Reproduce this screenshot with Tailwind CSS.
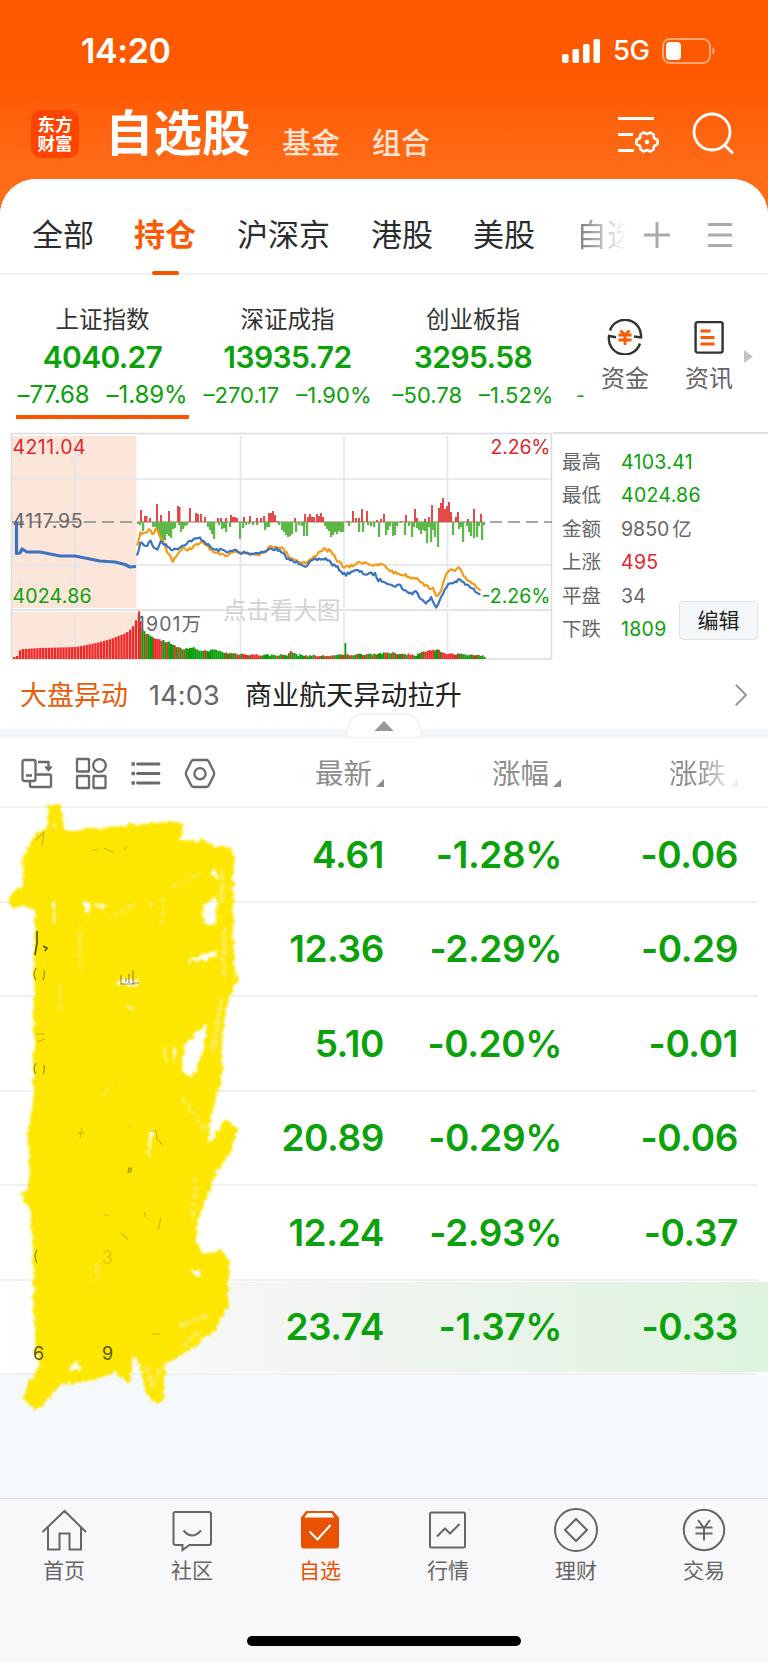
<!DOCTYPE html>
<html lang="zh-CN">

<head>
    <meta charset="UTF-8">
    <meta name="viewport" content="width=device-width, initial-scale=1.0">
    <title>自选股</title>
    <script src="https://cdn.jsdelivr.net/npm/@tailwindcss/browser@4"></script>
</head>

<body class="bg-[#f5f9fb] font-['Inter','Noto_Sans_CJK_SC',sans-serif] text-[#333]">
<div class="relative w-[768px] h-[1663px] overflow-hidden flex flex-col bg-linear-to-b from-[#ff5900] from-[80px] to-[#ff6d19] to-[180px]">

    <!-- Status bar -->
    <div class="h-[102px] shrink-0 flex items-center justify-between pl-[81px] pr-[52px] text-white">
        <span class="text-[34px] leading-none font-semibold tracking-[-0.4px]">14:20</span>
        <div class="flex items-center">
            <svg class="w-[38px] h-6" viewBox="0 0 38 24" fill="#fff">
                <rect x="0" y="15" width="6.5" height="9" rx="1.8"/>
                <rect x="10.5" y="10" width="6.5" height="14" rx="1.8"/>
                <rect x="21" y="5" width="6.5" height="19" rx="1.8"/>
                <rect x="31.5" y="0" width="6.5" height="24" rx="1.8"/>
            </svg>
            <span class="ml-[13px] w-[49px] text-[27.500px] leading-none font-medium tracking-[-0.5px]">5G</span>
            <svg class="w-[54px] h-[26px]" viewBox="0 0 54 26">
                <rect x="1" y="1" width="47" height="24" rx="7" fill="none" stroke="#fff" stroke-opacity=".45" stroke-width="2"/>
                <rect x="4" y="4" width="15" height="18" rx="4" fill="#fff"/>
                <path d="M50.5 9.500c3 1 3 6 0 7z" fill="#fff" fill-opacity=".5"/>
            </svg>
        </div>
    </div>

    <!-- Title bar -->
    <div class="h-[77px] shrink-0 flex pl-[31px] text-white">
        <div class="mt-[8px] w-12 h-12 rounded-[10px] bg-[#ff4400] flex flex-col items-center justify-center text-[17.500px] leading-[19px] font-bold">
            <span>东方</span><span>财富</span>
        </div>
        <h1 class="ml-[26px] w-[177px] mt-[7px] text-[48.500px] leading-[50px] font-bold">自选股</h1>
        <span class="w-[90px] mt-[24px] text-[29px] leading-[36px] font-medium text-[#ffe3d3]">基金</span>
        <span class="w-[157px] mt-[24px] text-[29px] leading-[36px] font-medium text-[#ffe3d3]">组合</span>
        <svg class="ml-[88px] mt-[12px] w-[44px] h-[42px]" viewBox="0 0 44 42" fill="none" stroke="#fff" stroke-width="2.800">
            <path d="M1 4.500h36M1 20.500h15M1 36.500h16"/>
            <path d="M26.500 18.500l3.500 1.500 3.500-1.500 3 2 .5 3.500 3.500 2v4l-3.500 2-.5 3.500-3 2-3.500-1.500-3.500 1.500-3-2-.5-3.500-3.500-2v-4l3.500-2 .5-3.500z" stroke-linejoin="round" stroke-width="2.600"/>
            <circle cx="30" cy="28" r="2.200" fill="#fff" stroke="none"/>
        </svg>
        <svg class="ml-[31px] mt-[10px] w-[44px] h-[44px]" viewBox="0 0 44 44" fill="none" stroke="#fff" stroke-width="2.800">
            <circle cx="20" cy="20" r="18"/>
            <path d="M32.500 33l8.500 8.500"/>
        </svg>
    </div>

    <!-- Content sheet -->
    <div class="flex-1 flex flex-col bg-[#f5f9fb] rounded-t-[36px] overflow-hidden">
        <div class="h-[96px] shrink-0 bg-white border-b-2 border-[#eeeff1] flex items-center pl-8 pt-[18px] text-[31px] leading-[40px] text-[#2b2c2e]">
            <span class="w-[102px]">全部</span>
            <span class="relative w-[103px] font-bold text-[#fb5a04]">持仓
                <i class="absolute left-[18px] top-[56px] w-[27px] h-1 rounded-xs bg-[#fb5400]"></i>
            </span>
            <span class="w-[134px]">沪深京</span>
            <span class="w-[102px]">港股</span>
            <span class="w-[103px]">美股</span>
            <span class="w-[50px] overflow-hidden whitespace-nowrap bg-linear-to-r from-[#777] to-[#fff] bg-clip-text text-transparent">自选</span>
            <svg class="ml-[18px] w-[26px] h-[26px]" viewBox="0 0 26 26" stroke="#aaa" stroke-width="3"><path d="M0 13h26M13 0v26"/></svg>
            <svg class="ml-[38px] w-[24px] h-[26px]" viewBox="0 0 24 26" stroke="#aaa" stroke-width="3" stroke-linecap="round"><path d="M1.300 2.500h21.400M1.300 13h21.400M1.300 23.500h21.400"/></svg>
        </div>

        <!-- Indices -->
        <div class="h-[157px] shrink-0 bg-white flex pt-[30px]">
            <div class="w-[205px] flex flex-col items-center">
                <span class="text-[23.500px] leading-[30px]">上证指数</span>
                <span class="mt-[4px] text-[30px] leading-[37px] font-semibold tracking-[-0.7px] text-[#0aa10a]">4040.27</span>
                <span class="mt-[3px] flex gap-[17px] text-[24px] leading-[32px] text-[#0aa10a] tracking-[-0.1px]"><b class="font-normal">–77.68</b><b class="font-normal">–1.89%</b></span>
                <i class="mt-[4px] w-[173px] h-[4px] bg-[#fb5400]"></i>
            </div>
            <div class="w-[165px] flex flex-col items-center">
                <span class="text-[23.500px] leading-[30px]">深证成指</span>
                <span class="mt-[4px] text-[30px] leading-[37px] font-semibold tracking-[-0.6px] text-[#0aa10a]">13935.72</span>
                <span class="mt-[3px] flex gap-[17px] text-[22px] leading-[32px] text-[#0aa10a] whitespace-nowrap"><b class="font-normal">–270.17</b><b class="font-normal">–1.90%</b></span>
            </div>
            <div class="w-[206px] flex flex-col items-center">
                <span class="text-[23.500px] leading-[30px]">创业板指</span>
                <span class="mt-[4px] text-[30px] leading-[37px] font-semibold tracking-[-0.6px] text-[#0aa10a]">3295.58</span>
                <span class="mt-[3px] flex gap-[17px] text-[22px] leading-[32px] text-[#0aa10a]"><b class="font-normal">–50.78</b><b class="font-normal">–1.52%</b></span>
            </div>
            <span class="w-[9px] mt-[74px] text-[19px] leading-[33px] text-[#0aa10a]">-</span>
            <div class="w-[80px] mt-[14px] flex flex-col items-center text-[#666]">
                <svg class="w-[36px] h-[36px]" viewBox="0 0 36 36" fill="none" stroke="#333" stroke-width="2.400">
                    <path d="M3 11.500a16 16 0 0 1 31 7l-7-1"/>
                    <path d="M33 24.500a16 16 0 0 1-31-7.500l7 1.200"/>
                    <path d="M13.500 11.500l4.500 4.500 4.500-4.500M11.500 16h13M11.500 21h13M18 16v10" stroke="#fb5a04" stroke-width="2.800"/>
                </svg>
                <span class="mt-[7px] text-[24px] leading-[34px]">资金</span>
            </div>
            <div class="ml-[4px] w-[80px] mt-[14px] flex flex-col items-center text-[#666]">
                <svg class="w-[36px] h-[36px]" viewBox="0 0 36 36" fill="none" stroke="#333" stroke-width="2.400">
                    <rect x="4.600" y="3.100" width="27" height="30.500" rx="2"/>
                    <path d="M9.500 12h10M9.500 18.500h14M9.500 25h14" stroke="#fb5a04" stroke-width="2.800"/>
                </svg>
                <span class="mt-[7px] text-[24px] leading-[34px]">资讯</span>
            </div>
            <svg class="-ml-[5px] mt-[45px] w-[9px] h-[13px]" viewBox="0 0 9 13"><path d="M0 0l9 6.500-9 6.500z" fill="#c4c4c4"/></svg>
        </div>

        <!-- Intraday chart, drawn in page coordinates from y=432 -->
        <div class="h-[229px] shrink-0 bg-white flex">
            <svg id="chart" class="w-[553px] h-[229px] shrink-0" viewBox="0 432 553 229" font-size="19.500">
                <path d="M12 436h124.500v172H12zM12 612h124.500v47H12z" fill="#fce6da"/>
                <path d="M12 479h540M12 565h540M75 436v172M240.500 436v172M344 436v172M447.500 436v172M240.500 612v47M344 612v47M447.500 612v47M75 612v47" stroke="#e3e5ec" stroke-width="1.600"/>
                <path d="M11.500 433.500V659H551.500V433.500zM12 610h540" fill="none" stroke="#d9dce1" stroke-width="1.600"/>
                <text x="223" y="618.500" font-size="23.500" fill="#d2d2d2">点击看大图</text>
                <path d="M12 522h125" stroke="#8a8a8a" stroke-width="1.600" stroke-dasharray="12 6"/>
                <path d="M490 522h62" stroke="#8a8a8a" stroke-width="1.600" stroke-dasharray="12 6"/>
                <text x="12.500" y="453.500" textLength="73" fill="#e0262d">4211.04</text>
                <text x="12.500" y="528" textLength="70" fill="#666">4117.95</text>
                <text x="12.500" y="603" textLength="79" fill="#0aa10a">4024.86</text>
                <text x="490.500" y="453.500" textLength="60" fill="#e0262d">2.26%</text>
                <text x="481.500" y="603" textLength="69" fill="#0aa10a">-2.26%</text>
                <g id="volume"></g>
                <g id="flow"></g>
                <g fill="none" stroke-linejoin="round">
                    <path d="M16.500 522V553.500L20 553 22 549 27 552 40 552 50 554 60 556 75 556 90 559 100 561 115 562 125 564.500 130 567 136 566.500" stroke="#3a74bf" stroke-width="3.200"/>
                    <polyline id="avg" stroke="#f59a14" stroke-width="2.200"/>
                    <polyline id="price" stroke="#3a74bf" stroke-width="2.200"/>
                </g>
                <text x="137" y="631" textLength="64" fill="#666">1901万</text>
            </svg>
            <div class="flex-1 border-t-2 border-[#dcdfe3] pl-[9px] pt-[12px] relative text-[19.500px] leading-[33.400px] text-[#666]">
                <div class="flex"><span class="w-[59px]">最高</span><span class="text-[#0aa10a] tracking-[0.3px]">4103.41</span></div>
                <div class="flex"><span class="w-[59px]">最低</span><span class="text-[#0aa10a] tracking-[0.3px]">4024.86</span></div>
                <div class="flex"><span class="w-[59px]">金额</span><span>9850<span class="ml-[3px]">亿</span></span></div>
                <div class="flex"><span class="w-[59px]">上涨</span><span class="text-[#e0262d] tracking-[0.3px]">495</span></div>
                <div class="flex"><span class="w-[59px]">平盘</span><span class="tracking-[0.3px]">34</span></div>
                <div class="flex"><span class="w-[59px]">下跌</span><span class="text-[#0aa10a] tracking-[0.3px]">1809</span></div>
                <button class="absolute left-[126px] top-[167px] w-[79px] h-[39px] rounded-[4px] border-[1.500px] border-[#dfe3e8] bg-[#f5f8fb] text-[21px] leading-[34px] text-[#222]">编辑</button>
            </div>
        </div>

        <!-- News ticker -->
        <div class="relative h-[68px] shrink-0 bg-white flex items-center pl-[20px] pt-[2px] text-[27px] leading-[40px]">
            <span class="w-[129px] text-[#e85d0c]">大盘异动</span>
            <span class="w-[96px] text-[#666] tracking-[0.200px]">14:03</span>
            <span class="w-[490px] text-[#222] tracking-[0.1px]">商业航天异动拉升</span>
            <svg class="w-[12px] h-[22px] mb-[3px]" viewBox="0 0 12 22" fill="none" stroke="#999" stroke-width="2"><path d="M.8.800L11 11 .8 21.200"/></svg>
            <svg class="absolute left-[345px] top-[52px] w-[78px] h-[26px] z-10" viewBox="0 0 78 26">
                <path d="M1 24.500C3 12 5 1 18 1h42c13 0 15 11 17 23.500z" fill="#fff" stroke="#eef1f3" stroke-width="1.500"/>
                <path d="M39 8l9.500 10h-19z" fill="#999"/>
            </svg>
        </div>
        <div class="h-[9px] shrink-0 bg-[#f3f7f9]"></div>

        <!-- Table header -->
        <div class="h-[70px] shrink-0 bg-white border-b-2 border-[#f0f0f1] flex items-center pt-[3px] text-[28.500px] leading-[40px] text-[#8d8d8d]">
            <svg class="ml-[20px] w-[200px] h-[34px]" viewBox="0 0 200 34" fill="none" stroke="#6a6a6a" stroke-width="2.300">
                <rect x="2.500" y="3" width="13" height="21" rx="2"/><path d="M6 18.500h6M18 5h10.500v7M25.500 9.500l3 3.500 3-3.500M10 25v3.500q0 1.500 1.500 1.500h18q1.500 0 1.500-1.500V19q0-1.500-1.500-1.500H16"/>
                <rect x="57" y="2" width="12" height="12.500" rx=".5"/><circle cx="79.500" cy="8.500" r="6.300"/><rect x="57" y="19" width="12" height="12" rx=".5"/><rect x="73.500" y="19" width="12" height="12" rx=".5"/>
                <path d="M117.500 7H139M117.500 16.500H139M117.500 26H139" stroke-width="2.900" stroke-linecap="round"/><path d="M111.500 7h3.400M111.500 16.500h3.400M111.500 26h3.400" stroke-width="3.400"/>
                <path d="M173.500 3h13q1.500 0 2.200 1.400l5 10.200q.8 2 0 4l-5 10q-.7 1.400-2.200 1.400h-13q-1.500 0-2.200-1.400l-5-10q-.8-2 0-4l5-10.200q.7-1.400 2.200-1.400z"/><circle cx="180" cy="16.700" r="5.600"/>
            </svg>
            <span class="ml-[95px]">最新</span><svg class="ml-[4px] mt-[19px] w-2 h-2" viewBox="0 0 8 8"><path d="M8 0v8H0z" fill="#8d8d8d"/></svg>
            <span class="ml-[108px]">涨幅</span><svg class="ml-[4px] mt-[19px] w-2 h-2" viewBox="0 0 8 8"><path d="M8 0v8H0z" fill="#8d8d8d"/></svg>
            <span class="ml-[108px] bg-linear-to-r from-[#8d8d8d] from-50% to-[#ddd] bg-clip-text text-transparent">涨跌</span><svg class="ml-[4px] mt-[19px] w-2 h-2" viewBox="0 0 8 8"><path d="M8 0v8H0z" fill="#eee"/></svg>
        </div>

        <!-- Holdings -->
        <div id="rows" class="shrink-0 bg-white text-[37px] font-semibold tracking-[-0.4px] text-[#0aa10a]"></div>

        <div class="flex-1"></div>

        <!-- Bottom tabs -->
        <nav class="relative h-[165px] shrink-0 bg-[#f8f8fb] border-t-[1.500px] border-[#dde1e5] grid grid-cols-6 pt-[9px] text-[21px] leading-[28px] text-[#666]">
            <div class="flex flex-col items-center">
                <svg class="w-[46px] h-[44px]" viewBox="0 0 46 44" fill="none" stroke="#666" stroke-width="2"><path d="M1.500 24L23.500 3l21.500 21M7 19v22.500h11.500V25.500h10V41.500H40V19"/></svg>
                <span class="mt-[5px]">首页</span>
            </div>
            <div class="flex flex-col items-center">
                <svg class="w-[46px] h-[44px]" viewBox="0 0 46 44" fill="none" stroke="#666" stroke-width="2"><path d="M6 4h34q2 0 2 2v29q0 2-2 2H20.500l-7 5v-5H6.500q-2 0-2-2V6q0-2 1.500-2zM14.500 22.500q8.500 10 17.500 0"/></svg>
                <span class="mt-[5px]">社区</span>
            </div>
            <div class="flex flex-col items-center text-[#e85200]">
                <svg class="w-[46px] h-[44px]" viewBox="0 0 46 44"><path d="M9 3h27l6 6.500v28q0 3-3 3H7q-3 0-3-3v-28z" fill="#e85200"/><path d="M10.500 5h24l3 4.500h-30z" fill="#fff"/><path d="M12.500 23.500l8 8 13-14.500" fill="none" stroke="#fff" stroke-width="2.200"/></svg>
                <span class="mt-[5px]">自选</span>
            </div>
            <div class="flex flex-col items-center">
                <svg class="w-[46px] h-[44px]" viewBox="0 0 46 44" fill="none" stroke="#666" stroke-width="2"><rect x="5" y="4.500" width="35" height="35" rx="1.500"/><path d="M12 28.500l8-8 5 5 9.500-9.500"/></svg>
                <span class="mt-[5px]">行情</span>
            </div>
            <div class="flex flex-col items-center">
                <svg class="w-[46px] h-[44px]" viewBox="0 0 46 44" fill="none" stroke="#666" stroke-width="2"><circle cx="23" cy="22" r="21"/><path d="M23 11l11 11-11 11-11-11z"/></svg>
                <span class="mt-[5px]">理财</span>
            </div>
            <div class="flex flex-col items-center">
                <svg class="w-[46px] h-[44px]" viewBox="0 0 46 44" fill="none" stroke="#666" stroke-width="2"><circle cx="23" cy="22" r="20.200"/><path d="M17 12l6 8 6-8M14.500 19.500h17M14.500 25.500h17M23 19.500v13"/></svg>
                <span class="mt-[5px]">交易</span>
            </div>
            <i class="absolute left-[247px] top-[137px] w-[274px] h-[10px] rounded-full bg-black"></i>
        </nav>
    </div>

    <!-- Marker scribble lying over the stock names -->
    <svg class="absolute left-0 top-[790px] w-[260px] h-[640px]" viewBox="0 790 260 640">
        <filter id="rough" x="-5%" y="-5%" width="110%" height="110%">
            <feTurbulence type="fractalNoise" baseFrequency=".22" numOctaves="2" seed="4"/>
            <feDisplacementMap in="SourceGraphic" scale="8" xChannelSelector="R" yChannelSelector="G"/>
            <feGaussianBlur stdDeviation=".9"/>
        </filter>
        <g filter="url(#rough)">
            <path fill="#fde600" fill-rule="evenodd" d="M48 805L62 805 64 831 120 826 176 821 183 824 182 836 178 840 205 841 213 846 230 846 235 857 233 870 234 965 237 982 230 994 226 1010 221 1050 223 1070 217 1095 210 1118 209 1145 224 1120 230 1121 238 1130 232 1150 215 1175 200 1215 195 1242 205 1254 220 1250 229 1260 228 1295 229 1305 215 1330 190 1350 172 1361 166 1360 164 1400 158 1404 146 1395 138 1358 133 1358 130 1385 115 1372 85 1382 60 1385 45 1403 35 1409 22 1398 35 1372 40 1365 35 1350 33 1250 30 1210 21 1195 30 1187 28 1135 33 1100 35 910 22 905 12 909 8 899 15 890 24 885 22 860 28 845 38 832 47 830zM203 905L213 898 218 903 216 924 204 924zM208 1022L203 1050 192 1078 182 1072 184 1045zM209 872L216 870 218 879zM189 960L205 954 219 950 214 957 190 963zM192 1270L200 1270 200 1276 192 1276zM68 1370L77 1362 80 1371zM53 900L55 900 55 924 53 924zM83 900L90 903 87 917zM95 904L108 905 107 908 96 907zM150 903L153 904 151 908zM164 1048L167 1048 166 1066zM173 1048L176 1048 175 1066zM150 1133L153 1128 150 1156 147 1152zM116 984L122 978 139 980 139 986zM126 1006L136 1008 130 1011zM55 818L56 832 54 832z"/>
            <g fill="none" stroke="#fff" stroke-linecap="round" opacity=".35">
                <path d="M222 870V905M224 930V975M221 1000L213 1050" stroke-width="4" stroke-dasharray="2 5"/>
                <path d="M184 1100L206 1130M195 1180L192 1225M180 1325L210 1315M185 1345L200 1330M146 1370L155 1390M163 1365L155 1380" stroke-width="4" stroke-dasharray="1 7"/>
                <path d="M80 925V970M110 918L140 902M163 900V925M175 885L205 872M60 985V1010M105 1095L113 1080M97 1265V1280" stroke-width="2.500" stroke-dasharray="1 6"/>
            </g>
        </g>
        <g fill="none" stroke="#545100" stroke-width="1.200">
            <path d="M37 931v12l-2 12M43 946l4 2-2 3" stroke-width="1.600"/>
            <path d="M121 975v9h14M129 974v9M133 970v13h6M126 978v4" opacity=".6"/>
            <path d="M36 968q-4 7 0 12M44 970q1 6-1 10M36 1063q-4 6 0 11M44 1065q1 6-1 9M37 1250q-4 6 0 13" opacity=".6"/>
            <path d="M36 840L44 832 42 846M92 850h6M104 848l10 5M124 850l3-4M35 1034h10M37 1042l8-3M77 1133h8M82 1128l-2 10M104 1215h5M121 1233l7 6M161 1218l-3 12M145 1212v5M150 1131h6l1 8 6 6M152 1334h8" opacity=".3"/>
            <path d="M129 1126h1M129 1168h2v4h-3z" opacity=".6"/>
        </g>
        <g font-size="18" fill="#5c5800"><text x="33" y="1359.500">6</text><text x="102" y="1359.500">9</text><text x="102" y="1264" opacity=".2">3</text></g>
    </svg>
</div>

<script>
    const holdings = [
        ['4.61', '-1.28%', '-0.06'],
        ['12.36', '-2.29%', '-0.29'],
        ['5.10', '-0.20%', '-0.01'],
        ['20.89', '-0.29%', '-0.06'],
        ['12.24', '-2.93%', '-0.37'],
        ['23.74', '-1.37%', '-0.33'],
    ];
    document.getElementById('rows').innerHTML = holdings.map((r, i) => `
        <div class="h-[94.500px] flex flex-col">
            <div class="flex-1 flex items-center leading-none ${i === 5 ? 'mt-[1px] mb-px bg-linear-to-r from-white via-[#f1f4f1] via-45% to-[#def4df]' : ''}">
                <span class="w-[384px] text-right">${r[0]}</span>
                <span class="w-[178px] text-right">${r[1]}</span>
                <span class="w-[176px] text-right">${r[2]}</span>
            </div>
            <div class="h-[2px] mr-[10px] bg-[#f0f0f1]"></div>
        </div>`).join('');

    // small repeatable wobble so the curves look like ticks
    let seed = 7;
    const rnd = () => (seed = (seed * 16807) % 2147483647) / 2147483647;
    function at(pts, x) {
        for (let i = 1; i < pts.length; i++) {
            const [x0, y0] = pts[i - 1], [x1, y1] = pts[i];
            if (x <= x1) return y0 + (y1 - y0) * (x - x0) / (x1 - x0);
        }
        return pts[pts.length - 1][1];
    }
    const pairs = s => s.split(' ').map(p => p.split(',').map(Number));
    function line(id, pts) {
        const out = [];
        for (let x = pts[0][0]; x <= 482; x += 1.7) out.push(x.toFixed(1) + ',' + (at(pts, x) + (rnd() - .5) * 3).toFixed(1));
        document.getElementById(id).setAttribute('points', out.join(' '));
    }
    line('price', pairs('137,557 140,543 143,544 147,547 150,538 153,547 158,549 161,541 165,545 170,548 174,550 180,547 185,544 190,541 196,539 200,538 205,542 210,547 215,550 222,550 230,552 236,550 240,554 245,552 252,554 260,552 265,552 270,549 277,549 283,554 288,559 294,562 300,563 306,566 312,561 320,559 327,559 332,564 338,568 345,575 352,571 358,571 365,574 375,574 378,580 385,581 392,586 400,585 404,590 412,594 415,591 422,599 427,603 431,598 436,607 441,598 448,584 455,582 460,580 465,584 470,587 475,591 480,593 482,594'));
    line('avg', pairs('137,545 140,534 145,532 150,530 153,537 156,529 160,536 163,542 167,552 170,556 173,561 178,553 183,549 190,549 196,545 203,543 208,546 214,553 220,555 228,555 234,550 240,553 250,553 258,554 265,551 270,547 277,546 283,549 290,557 300,562 306,563 313,558 318,553 323,549 330,551 337,560 344,567 350,567 357,563 365,562 375,566 382,564 388,569 395,573 405,575 412,578 417,577 424,585 430,588 432,587 436,597 441,590 445,578 449,570 455,571 459,568 463,575 468,580 475,585 481,590'));

    const bar = (x, y, w, h, c) => `<rect x="${x}" y="${y}" width="${w}" height="${h}" fill="${c}"/>`;

    // money flow around the previous close
    const up = pairs('140,12 144,6 145.500,6 149,4 156,18 160,7 168,11 177,16 178.500,15 189,14 195,9 197,8 200,8 204,5 217,4 220,4 225,4 230,7 232,5 234,5 236,4 243,5 249,6 256,4 260,4 263,6 268,9 270,9 272,11 274,7 277,1 294,4 304,8 307,5 309,8 311,5 313,5 316,8 318,6 320,9 322,5 347,1 352,11 355,4 358,4 361,13 366,11 376,2 380,3 383,8 400,1 405,7 414,13 416,4 424,3 428,5 431,17 438,14 440,19 442,24 444,13 446,16 448,20 450,10 455,5 457,10 467,3 473,13 480,8');
    const down = pairs('137,2 139,3 142,9 152,5 154,5 156,7 158,14 160,18 162,20 164,18 166,12 168,14 170,16 172,7 174,6 178,3 180,10 182,7 184,4 186,3 207,5 209,8 211,12 213,17 218,3 221,7 223,6 225,10 229,5 239,17 242,6 245,3 248,2 252,3 256,3 264,8 266,5 268,5 278,3 281,8 283,10 285,13 287,15 289,14 291,12 295,10 298,3 301,4 303,14 306,14 324,4 326,7 328,9 330,15 332,13 334,10 336,12 338,9 340,10 342,10 348,4 358,10 362,10 367,3 370,4 373,5 378,15 385,13 387,8 389,4 392,14 394,13 396,4 404,13 408,4 411,15 413,5 416,6 418,8 420,12 422,8 424,9 426,21 428,5 430,20 432,8 434,15 437,25 452,13 458,7 460,5 462,20 466,4 468,10 470,14 473,16 476,15 478,4 481,18 483,3');
    document.getElementById('flow').innerHTML =
        '<path d="M137 522h346" stroke="#a66b5b" stroke-width="1.200"/>' +
        up.map(([x, h]) => bar(x, 522 - h, 2, h, '#e34b4b')).join('') +
        down.map(([x, h]) => bar(x, 522, 2.2, h, '#5cb947')).join('');

    // volume
    const vol = pairs('13,2 16,3 17,8 22,10 40,11 75,12 95,16 110,20 125,26 131,31 135,39 137,42 138,47 141,30 146,25 152,22 160,19 170,16 180,10 187,10 194,11 200,8 215,9 225,6 240,5 260,4 286,4 291,8 296,4 320,3 344,4 390,6 405,5 415,4 427,9 437,9 445,5 470,4 481,4 484,1');
    let v = '';
    for (let x = 13; x < 484; x += x < 137 ? 2.9 : 1.9) {
        const h = at(vol, x) + (x > 142 ? (rnd() - .5) * 2 : 0);
        const red = x < 140 || (x > 441 && x < 456) || rnd() < (x > 200 && x < 222 ? .1 : .45);
        v += bar(x.toFixed(1), (659 - h).toFixed(1), x < 137 ? 2.4 : 2, h.toFixed(1), red ? '#f02828' : '#0a9d0a');
    }
    v += bar(344.500, 643, 1.8, 16, '#0a9d0a') + bar(138.300, 611, 1.8, 48, '#e03030');
    document.getElementById('volume').innerHTML = v;
</script>
</body>

</html>
